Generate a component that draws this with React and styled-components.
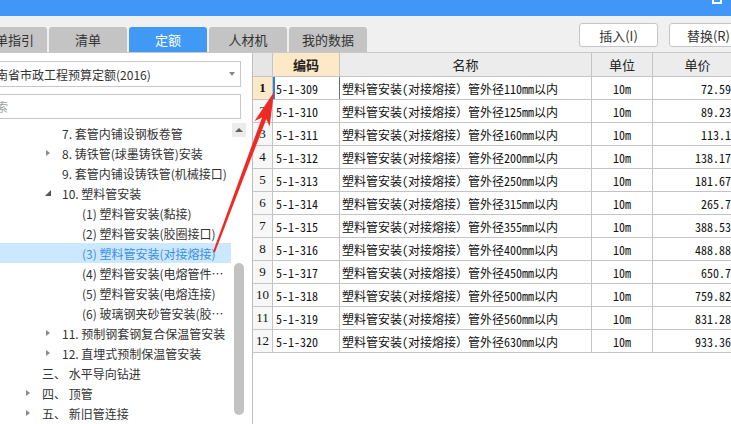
import React from 'react';
import styled, { createGlobalStyle } from 'styled-components';

const GlobalStyle = createGlobalStyle`
  html, body {
    margin: 0;
    padding: 0;
    width: 731px;
    height: 424px;
    overflow: hidden;
    background: #fff;
  }
  body {
    font-family: "Noto Sans CJK SC", "Noto Sans", sans-serif;
    font-size: 12px;
    color: #333;
  }
  * { box-sizing: border-box; }
`;

const Page = styled.div`
  position: relative;
  width: 731px;
  height: 424px;
  display: flex;
  flex-direction: column;
  overflow: hidden;
`;

const TitleBar = styled.div`
  height: 16px;
  flex: 0 0 16px;
  background: #4197f7;
  display: flex;
  justify-content: flex-end;
  padding-right: 9px;
`;

const MaxIcon = styled.div`
  width: 10px;
  height: 10px;
  margin-top: -6px;
  border: 2px solid #fff;
`;

const Toolbar = styled.div`
  height: 37px;
  flex: 0 0 37px;
  background: #f0f0f0;
  border-bottom: 1px solid #c9c9c9;
  display: flex;
  justify-content: space-between;
  align-items: flex-end;
`;

const Tabs = styled.div`
  display: flex;
  gap: 2px;
  margin-left: -31px;
`;

const Tab = styled.div`
  width: 78px;
  height: 25px;
  border-radius: 3px 3px 0 0;
  background: ${p => (p.$active ? '#4199f6' : '#c4c4c4')};
  color: ${p => (p.$active ? '#fff' : '#333')};
  font-size: 13px;
  display: flex;
  align-items: center;
  justify-content: center;
`;

const Buttons = styled.div`
  align-self: flex-start;
  margin-top: 7px;
  margin-right: -17px;
  display: flex;
  gap: 11px;
`;

const Button = styled.div`
  width: 79px;
  height: 24px;
  background: #fff;
  border: 1px solid #c6c6c6;
  border-radius: 3px;
  font-size: 13px;
  color: #333;
  display: flex;
  align-items: center;
  justify-content: center;
`;

const Main = styled.div`
  flex: 1;
  display: flex;
  min-height: 0;
`;

const LeftPanel = styled.div`
  width: 252px;
  flex: 0 0 252px;
  overflow: hidden;
  display: flex;
  flex-direction: column;
  padding-top: 8px;
`;

const Select = styled.div`
  margin-left: -23px;
  width: 264px;
  height: 26px;
  flex: 0 0 26px;
  border: 1px solid #c8c8c8;
  padding: 0 6px;
  display: flex;
  align-items: center;
  justify-content: space-between;
  font-size: 12px;
  color: #333;
  white-space: nowrap;
`;

const Caret = styled.span`
  width: 0;
  height: 0;
  border-left: 3px solid transparent;
  border-right: 3px solid transparent;
  border-top: 4px solid #888;
  margin-right: -1px;
`;

const Search = styled.div`
  margin-left: -23px;
  margin-top: 7px;
  width: 264px;
  height: 25px;
  flex: 0 0 25px;
  border: 1px solid #c8c8c8;
  padding: 0 6px;
  display: flex;
  align-items: center;
  color: #a0a0a0;
`;

const TreeArea = styled.div`
  margin-top: 4px;
  flex: 1;
  display: flex;
  min-height: 0;
`;

const TreeList = styled.div`
  width: 231px;
  flex: 0 0 231px;
`;

const TreeRow = styled.div`
  height: 20px;
  display: flex;
  align-items: center;
  padding-left: ${p => (p.$level - 1) * 20 + 26}px;
  background: ${p => (p.$selected ? '#cce8ff' : 'transparent')};
  color: ${p => (p.$selected ? '#3a8ee6' : '#333')};
  white-space: pre;
`;

const Toggle = styled.span`
  width: 16px;
  flex: 0 0 16px;
  display: flex;
  align-items: center;
`;

const Collapsed = styled.span`
  width: 0;
  height: 0;
  border-top: 3.5px solid transparent;
  border-bottom: 3.5px solid transparent;
  border-left: 4px solid #8a8a8a;
`;

const Expanded = styled.span`
  width: 0;
  height: 0;
  margin-left: -1px;
  border-left: 6px solid transparent;
  border-bottom: 6px solid #555;
`;

const Label = styled.span`
  overflow: hidden;
  text-overflow: ellipsis;
  min-width: 0;
`;

const ScrollBar = styled.div`
  width: 14px;
  flex: 0 0 14px;
  margin-left: 1px;
  display: flex;
  flex-direction: column;
  align-items: center;
`;

const ScrollUp = styled.div`
  width: 14px;
  height: 14px;
  background: #ebebeb;
  display: flex;
  align-items: center;
  justify-content: center;
  &::after {
    content: '';
    border-left: 4px solid transparent;
    border-right: 4px solid transparent;
    border-bottom: 4px solid #606060;
  }
`;

const Thumb = styled.div`
  margin-top: 126px;
  width: 10px;
  height: 152px;
  border-radius: 5px;
  background: #c2c2c2;
`;

const Grid = styled.div`
  flex: 1;
  border-left: 1px solid #bdbdbd;
  overflow: hidden;
  background: #fff;
  font-family: "Noto Sans Mono CJK SC", "Noto Sans CJK SC", monospace;
  font-size: 12px;
  color: #111;
`;

const Row = styled.div`
  display: flex;
  height: ${p => (p.$header ? 24 : 23)}px;
  border-bottom: 1px solid #c4c4c4;
`;

const Cell = styled.div`
  flex: 0 0 ${p => p.$w}px;
  border-right: 1px solid #c4c4c4;
  display: flex;
  align-items: center;
  justify-content: ${p => p.$align || 'flex-start'};
  padding: 0 ${p => p.$pad ?? 3}px;
  white-space: nowrap;
  overflow: hidden;
  background: ${p => p.$bg || 'transparent'};
`;

const HeadCell = styled(Cell)`
  font-family: "Noto Sans CJK SC", sans-serif;
  font-size: 13px;
  color: #222;
  font-weight: ${p => (p.$bold ? 700 : 400)};
  justify-content: center;
`;

const NumCell = styled(Cell)`
  justify-content: center;
  padding: 0;
  font-family: "Liberation Serif", "Noto Sans CJK SC", serif;
  font-size: 13px;
  font-weight: ${p => (p.$active ? 700 : 400)};
  background: ${p => (p.$active ? '#fde8c8' : '#f7f7f7')};
`;

const CodeCell = styled(Cell)`
  box-shadow: ${p => (p.$focus ? 'inset 2px 0 0 #2b7de9' : 'none')};
  border-right-color: ${p => (p.$focus ? '#6e6e6e' : '#c4c4c4')};
`;

const Overlay = styled.svg`
  position: absolute;
  left: 0;
  top: 0;
  pointer-events: none;
`;

const cols = { num: 20, code: 67, name: 252, unit: 61, price: 90 };

const tree = [
  { level: 2, text: '7. 套管内铺设钢板卷管' },
  { level: 2, toggle: 'c', text: '8. 铸铁管(球墨铸铁管)安装' },
  { level: 2, text: '9. 套管内铺设铸铁管(机械接口)' },
  { level: 2, toggle: 'e', text: '10. 塑料管安装' },
  { level: 3, text: '(1) 塑料管安装(黏接)' },
  { level: 3, text: '(2) 塑料管安装(胶圈接口)' },
  { level: 3, text: '(3) 塑料管安装(对接熔接)', selected: true },
  { level: 3, text: '(4) 塑料管安装(电熔管件连接)' },
  { level: 3, text: '(5) 塑料管安装(电熔连接)' },
  { level: 3, text: '(6) 玻璃钢夹砂管安装(胶圈接口)' },
  { level: 2, toggle: 'c', text: '11. 预制钢套钢复合保温管安装' },
  { level: 2, toggle: 'c', text: '12. 直埋式预制保温管安装' },
  { level: 1, text: '三、 水平导向钻进' },
  { level: 1, toggle: 'c', text: '四、 顶管' },
  { level: 1, toggle: 'c', text: '五、 新旧管连接' },
];

const items = [
  [309, 110, '72.59'],
  [310, 125, '89.23'],
  [311, 160, '113.1'],
  [312, 200, '138.17'],
  [313, 250, '181.67'],
  [314, 315, '265.7'],
  [315, 355, '388.53'],
  [316, 400, '488.88'],
  [317, 450, '650.7'],
  [318, 500, '759.82'],
  [319, 560, '831.28'],
  [320, 630, '933.36'],
];

const tabs = ['清单指引', '清单', '定额', '人材机', '我的数据'];

function Arrow() {
  return (
    <Overlay width="731" height="424" viewBox="0 0 731 424">
      <polygon
        fill="#ee2a24"
        points="213.1,251.6 262.1,117.4 254.6,121 274,92 269.6,126.6 266.3,119 214.9,252.4"
      />
    </Overlay>
  );
}

export default function App() {
  return (
    <Page>
      <GlobalStyle />
      <TitleBar>
        <MaxIcon />
      </TitleBar>
      <Toolbar>
        <Tabs>
          {tabs.map(t => (
            <Tab key={t} $active={t === '定额'}>{t}</Tab>
          ))}
        </Tabs>
        <Buttons>
          <Button>插入(I)</Button>
          <Button>替换(R)</Button>
        </Buttons>
      </Toolbar>
      <Main>
        <LeftPanel>
          <Select>
            <span>河南省市政工程预算定额(2016)</span>
            <Caret />
          </Select>
          <Search>搜索</Search>
          <TreeArea>
            <TreeList>
              {tree.map(n => (
                <TreeRow key={n.text} $level={n.level} $selected={n.selected}>
                  <Toggle>
                    {n.toggle === 'c' && <Collapsed />}
                    {n.toggle === 'e' && <Expanded />}
                  </Toggle>
                  <Label>{n.text}</Label>
                </TreeRow>
              ))}
            </TreeList>
            <ScrollBar>
              <ScrollUp />
              <Thumb />
            </ScrollBar>
          </TreeArea>
        </LeftPanel>
        <Grid>
          <Row $header>
            <HeadCell $w={cols.num} $bg="#e6e6e6" />
            <HeadCell $w={cols.code} $bg="#fde8c8" $bold>编码</HeadCell>
            <HeadCell $w={cols.name} $bg="#ececec">名称</HeadCell>
            <HeadCell $w={cols.unit} $bg="#ececec">单位</HeadCell>
            <HeadCell $w={cols.price} $bg="#ececec">单价</HeadCell>
          </Row>
          {items.map(([code, size, price], i) => (
            <Row key={code}>
              <NumCell $w={cols.num} $active={i === 0}>{i + 1}</NumCell>
              <CodeCell $w={cols.code} $focus={i === 0}>5-1-{code}</CodeCell>
              <Cell $w={cols.name} $pad={2}>塑料管安装(对接熔接）管外径{size}mm以内</Cell>
              <Cell $w={cols.unit} $align="center">10m</Cell>
              <Cell $w={cols.price} $align="flex-end" $pad={11}>{price}</Cell>
            </Row>
          ))}
        </Grid>
      </Main>
      <Arrow />
    </Page>
  );
}
